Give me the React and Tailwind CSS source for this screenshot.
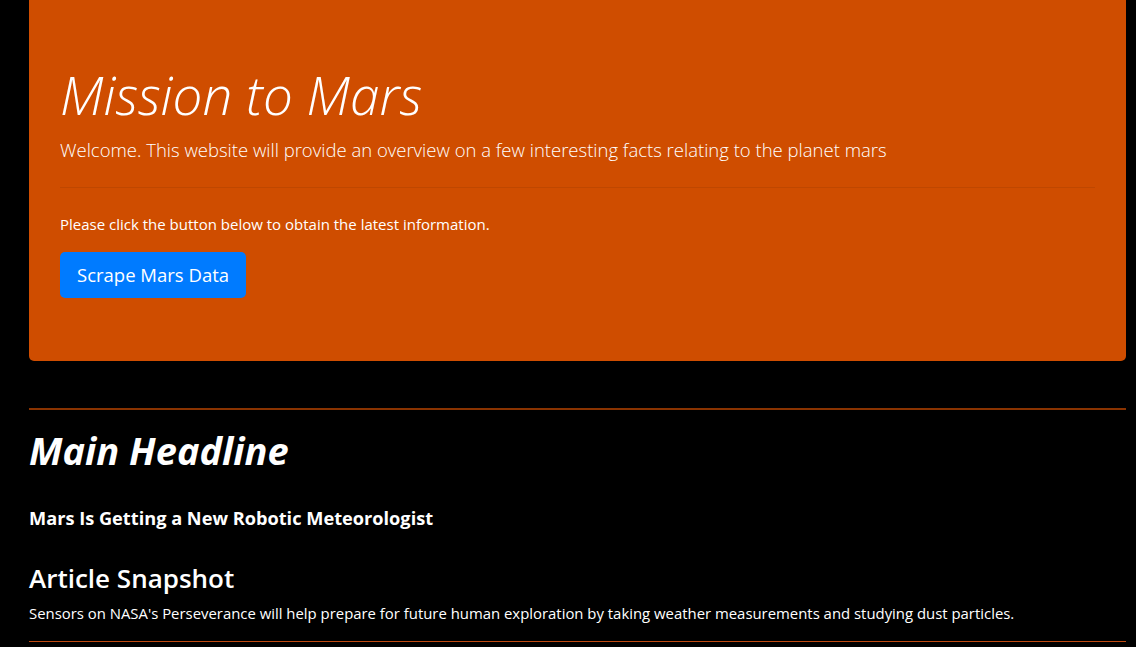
import React from 'react';

function Jumbotron() {
  return (
    <div className="ml-[29px] mr-[10px] rounded-b-[5px] bg-[#cf4d00] px-[31px] pt-[61px] pb-[63px] text-white">
      <h1 className="text-[53px] font-light italic leading-[67px]">Mission to Mars</h1>
      <p className="mt-[7px] text-[18.5px] font-light leading-[30px]">
        Welcome. This website will provide an overview on a few interesting facts relating to the planet mars
      </p>
      <hr className="mt-[22px] border-t border-[#bf4700]" />
      <p className="mt-[24px] text-[15px] leading-[24px]">Please click the button below to obtain the latest information.</p>
      <button className="mt-[16px] rounded-[5px] bg-[#007bff] px-[17px] py-[8px] text-[18.5px] leading-[30px] text-white">
        Scrape Mars Data
      </button>
    </div>
  );
}

export default function App() {
  return (
    <div className="min-h-[647px] bg-black font-['Open_Sans','Noto_Sans',sans-serif] text-white">
      <Jumbotron />
      <div className="ml-[29px] mr-[10px] pt-[47px]">
        <hr className="border-t-2 border-[#8a3300]" />
        <h1 className="mt-[16px] text-[38px] font-bold italic leading-[48px]">Main Headline</h1>
        <h4 className="mt-[32px] text-[18.2px] font-bold leading-[24px]">Mars Is Getting a New Robotic Meteorologist</h4>
        <h3 className="mt-[31px] text-[26px] font-semibold leading-[34px]">Article Snapshot</h3>
        <p className="mt-[6px] text-[14.9px] leading-[24px]">
          Sensors on NASA's Perseverance will help prepare for future human exploration by taking weather measurements and studying dust particles.
        </p>
        <hr className="mt-[16px] border-t border-[#c04a10]" />
      </div>
    </div>
  );
}
